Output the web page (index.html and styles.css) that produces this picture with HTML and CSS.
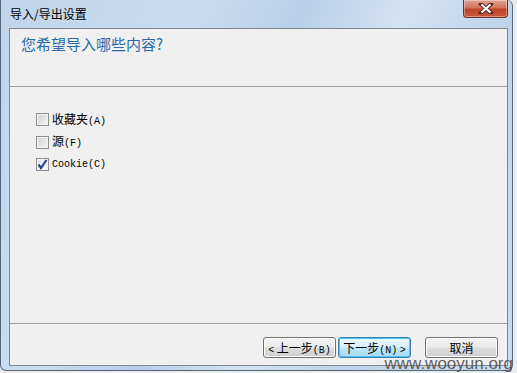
FILE: index.html
```html
<!DOCTYPE html>
<html lang="zh">
<head>
<meta charset="utf-8">
<title>导入/导出设置</title>
<link rel="stylesheet" href="styles.css">
</head>
<body>
<div class="window">
  <div class="titlebar">
    <span class="title">导入/导出设置</span>
    <div class="close">
      <svg width="18" height="11" viewBox="0 0 18 11"><path d="M4 1 L14 10 M14 1 L4 10" stroke="#5a2a22" stroke-width="4" stroke-linecap="square"/><path d="M4.5 1.5 L13.5 9.5 M13.5 1.5 L4.5 9.5" stroke="#fff" stroke-width="2.2"/></svg>
    </div>
  </div>
  <div class="client">
    <div class="header">您希望导入哪些内容?</div>
    <div class="content">
      <label class="opt"><span class="box"></span><span class="txt">收藏夹<span class="en">(A)</span></span></label>
      <label class="opt"><span class="box"></span><span class="txt">源<span class="en">(F)</span></span></label>
      <label class="opt"><span class="box checked"><svg width="11" height="11" viewBox="0 0 11 11"><path d="M1.5 5.5 L4 9 L9.5 1" fill="none" stroke="#24488a" stroke-width="2.2"/></svg></span><span class="txt en">Cookie(C)</span></label>
    </div>
    <div class="footer">
      <div class="btn"><span class="en">&lt;</span>&nbsp;上一步<span class="en">(B)</span></div>
      <div class="btn focus">下一步<span class="en">(N)</span>&nbsp;<span class="en">&gt;</span></div>
      <div class="btn cancel">取消</div>
    </div>
  </div>
  <div class="watermark">www.wooyun.org</div>
</div>
</body>
</html>
```
FILE: styles.css
```css
html, body {
  margin: 0;
  padding: 0;
}
body {
  width: 517px;
  height: 373px;
  background: #e9ecef;
  overflow: hidden;
  font-family: "Noto Sans CJK SC", sans-serif;
}
.window {
  position: relative;
  width: 513px;
  height: 371px;
  box-sizing: border-box;
  border: 1px solid #56667a;
  border-top: none;
  border-radius: 0 6px 6px 6px;
  background: linear-gradient(115deg, #c0d5eb 0%, #c9dcef 30%, #b8cfe8 45%, #d3e2f2 60%, #bfd4ea 75%, #cadcef 100%);
  padding: 0 4px 4px 8px;
  display: flex;
  flex-direction: column;
}
.titlebar {
  height: 28px;
  flex: none;
  display: flex;
  align-items: flex-start;
  justify-content: space-between;
}
.title {
  font-size: 12px;
  line-height: 12px;
  margin-top: 8px;
  color: #000;
  margin-left: 1px;
}
.close {
  width: 45px;
  height: 18px;
  box-sizing: border-box;
  border: 1px solid #6e3128;
  border-top: none;
  border-radius: 0 0 4px 4px;
  background: linear-gradient(#e2a594 0%, #d3735d 45%, #c04327 55%, #c9573c 100%);
  box-shadow: inset 0 0 0 1px rgba(255,255,255,0.35);
  display: flex;
  align-items: center;
  justify-content: center;
}
.client {
  flex: 1;
  border: 1px solid #828790;
  background: #f0f0f0;
  display: flex;
  flex-direction: column;
}
.header {
  height: 58px;
  flex: none;
  box-sizing: border-box;
  border-bottom: 1px solid #a0a0a0;
  padding: 5px 0 0 11px;
  font-size: 15px;
  line-height: 20px;
  color: #2a6aab;
}
.content {
  flex: 1;
  padding: 26px 0 0 26px;
  display: flex;
  flex-direction: column;
  gap: 9.5px;
}
.opt {
  display: flex;
  align-items: center;
  height: 13px;
  gap: 3px;
  font-size: 12px;
  color: #000;
}
.box {
  width: 11px;
  height: 11px;
  border: 1px solid #8e8f8f;
  background: linear-gradient(135deg, #d2d2d2, #f3f3f3);
  box-shadow: inset 0 0 0 1px #f4f4f4;
  display: flex;
  align-items: center;
  justify-content: center;
}
.box.checked {
  background: linear-gradient(135deg, #e3e3e3, #fbfbfb);
}
.en {
  font-family: "Liberation Mono", monospace;
  font-size: 10px;
}
.txt {
  line-height: 13px;
}
.footer {
  height: 42px;
  flex: none;
  box-sizing: border-box;
  border-top: 1px solid #a0a0a0;
  display: flex;
  align-items: flex-start;
  padding: 13px 0 0 253px;
}
.btn {
  width: 73px;
  height: 21px;
  box-sizing: border-box;
  border: 1px solid #707070;
  border-radius: 3px;
  background: linear-gradient(#f2f2f2 0%, #ebebeb 48%, #dddddd 52%, #cfcfcf 100%);
  box-shadow: inset 0 0 0 1px #fcfcfc;
  font-size: 12px;
  line-height: 19px;
  text-align: center;
  color: #000;
}
.btn.focus {
  margin-left: 2px;
  border-color: #3c7fb1;
  background: linear-gradient(#eaf6fd 0%, #d9f0fc 48%, #bee6fd 52%, #a7d9f5 100%);
  box-shadow: inset 0 0 0 1px #48c6f8;
}
.btn.cancel {
  margin-left: 14px;
}
.watermark {
  position: absolute;
  right: -1px;
  bottom: 0;
  font-family: "Liberation Sans", Arial, sans-serif;
  font-size: 17px;
  line-height: 12px;
  color: rgba(70, 70, 70, 0.85);
}
```
